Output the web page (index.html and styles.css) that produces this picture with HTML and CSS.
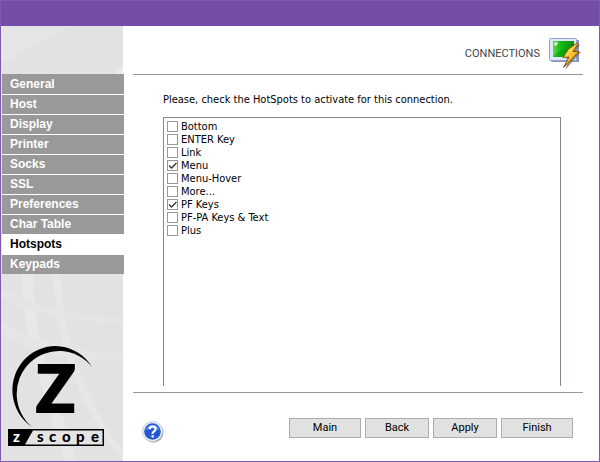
FILE: index.html
```
<!DOCTYPE html>
<html lang="en">
<head>
    <meta charset="UTF-8">
    <meta name="viewport" content="width=device-width, initial-scale=1.0">
    <title>z/Scope - Connections</title>
    <link rel="stylesheet" href="styles.css">
</head>
<body>
    <div class="window">
        <div class="titlebar"></div>
        <div class="content">
            <aside class="sidebar">
                <svg class="waves" viewBox="0 0 122 434" preserveAspectRatio="none" aria-hidden="true">
                    <path d="M0 0H70L0 38Z" fill="#e5e5e5"/>
                    <path d="M112 48L122 40V48Z" fill="#ebebeb"/>
                    <path d="M20 240H32Q32 290 42 325T75 434H64Q42 370 31 325T20 240Z" fill="#e8e8e8"/>
                    <path d="M52 240H60Q60 290 75 335T122 425V434Q80 380 66 330T52 240Z" fill="#e7e7e7"/>
                    <path d="M0 262Q50 290 122 291V296Q50 295 0 272Z" fill="#e5e5e5"/>
                    <path d="M0 294Q30 314 75 322T122 324V334Q40 334 0 306Z" fill="#e5e5e5"/>
                </svg>
                <nav class="menu">
                    <a href="#general">General</a>
                    <a href="#host">Host</a>
                    <a href="#display">Display</a>
                    <a href="#printer">Printer</a>
                    <a href="#socks">Socks</a>
                    <a href="#ssl">SSL</a>
                    <a href="#preferences">Preferences</a>
                    <a href="#chartable">Char Table</a>
                    <a href="#hotspots" class="active">Hotspots</a>
                    <a href="#keypads">Keypads</a>
                </nav>
                <svg class="logo" width="96" height="100" viewBox="0 0 96 100" role="img" aria-label="z/scope">
                    <path d="M84 21A43 44 0 1 0 24 81A42.300 43 0 1 1 84 21Z"/>
                    <text class="logo-z" x="28" y="66">Z</text>
                    <rect y="83" width="96" height="17"/>
                    <path d="M25 84.500H94.500V98.500H17Z" fill="#e4e4e4"/>
                    <text class="logo-name" x="5" y="96" fill="#fff">z</text>
                    <text class="logo-name" x="29 41 54 68 83" y="96">scope</text>
                </svg>
            </aside>
            <main class="main">
                <header class="page-header">
                    <h1>CONNECTIONS</h1>
                    <svg width="32" height="34" viewBox="0 0 32 34" aria-hidden="true">
                        <defs>
                            <linearGradient id="screen" x1="0" y1="0" x2="1" y2="0">
                                <stop offset="0" stop-color="#5bdc4a"/>
                                <stop offset="0.4" stop-color="#12b512"/>
                                <stop offset="1" stop-color="#078a08"/>
                            </linearGradient>
                            <linearGradient id="bolt" x1="0" y1="0" x2="1" y2="1">
                                <stop offset="0" stop-color="#fff3a0"/>
                                <stop offset="0.5" stop-color="#ffc42c"/>
                                <stop offset="1" stop-color="#c96f00"/>
                            </linearGradient>
                        </defs>
                        <rect x="2" y="3" width="28" height="22" rx="1" fill="#8d93a8"/>
                        <rect x="0.5" y="1.5" width="27" height="22" rx="1" fill="#dfe7fb" stroke="#8fa3d8"/>
                        <rect x="4" y="4" width="21" height="16" fill="url(#screen)"/>
                        <path d="M4 20Q12 10 25 8V20Z" fill="#06a006" opacity="0.6"/>
                        <path d="M5 6L9 5L8 8L6 9Z" fill="#fff" opacity="0.9"/>
                        <path d="M24 8H31L26 15H32L16 33L20 22H17Z" fill="#777" opacity="0.8"/>
                        <path d="M27.500 6.500L19.500 12L14 20.500L20 20L14.500 30.500L30 14.500L24 14.500L29 7Z" fill="url(#bolt)" stroke="#8a4d0a"/>
                    </svg>
                </header>
                <section class="panel">
                    <p id="prompt">Please, check the HotSpots to activate for this connection.</p>
                    <div class="list" role="group" aria-labelledby="prompt">
                        <label><input type="checkbox">Bottom</label>
                        <label><input type="checkbox">ENTER Key</label>
                        <label><input type="checkbox">Link</label>
                        <label><input type="checkbox" checked>Menu</label>
                        <label><input type="checkbox">Menu-Hover</label>
                        <label><input type="checkbox">More...</label>
                        <label><input type="checkbox" checked>PF Keys</label>
                        <label><input type="checkbox">PF-PA Keys &amp; Text</label>
                        <label><input type="checkbox">Plus</label>
                    </div>
                </section>
                <footer class="footer">
                    <button type="button" class="help" aria-label="Help">
                        <svg width="22" height="22" viewBox="0 0 22 22" aria-hidden="true">
                            <circle cx="11.500" cy="11.500" r="10" fill="#9a9a9a"/>
                            <circle cx="10.500" cy="10.500" r="10" fill="#edf0f7" stroke="#c3cadb"/>
                            <circle cx="10.500" cy="10.500" r="8.300" fill="#2458d0"/>
                            <path d="M3.500 9A7.300 7.300 0 0 1 17.500 9Q10 6 3.500 9Z" fill="#5b8bec"/>
                            <path d="M7.700 8.300Q7.700 5.500 10.700 5.500T13.600 8.100Q13.600 9.500 12 10.500T10.600 12.800" fill="none" stroke="#fff" stroke-width="2.200"/>
                            <rect x="9.500" y="14.200" width="2.300" height="2.300" fill="#fff"/>
                        </svg>
                    </button>
                    <div class="buttons">
                        <button type="button" class="btn btn-wide">Main</button>
                        <button type="button" class="btn">Back</button>
                        <button type="button" class="btn">Apply</button>
                        <button type="button" class="btn btn-wide">Finish</button>
                    </div>
                </footer>
            </main>
        </div>
    </div>
</body>
</html>
```

FILE: styles.css
```
* {
    box-sizing: border-box;
}
body {
    margin: 0;
    font-family: "DejaVu Sans Condensed", "DejaVu Sans", sans-serif;
    font-size: 11px;
    color: #000;
}
.window {
    display: flex;
    flex-direction: column;
    min-height: 100vh;
    border: 1px solid #7f5bb0;
    background: #fff;
}
.titlebar {
    height: 25px;
    background: #744da9;
}
.content {
    display: flex;
    flex: 1;
}

/* left column */
.sidebar {
    position: relative;
    display: flex;
    flex-direction: column;
    width: 122px;
    padding-top: 48px;
    background: #e2e2e2;
}
.waves {
    position: absolute;
    top: 0;
    left: 0;
    width: 100%;
    height: 100%;
}
.menu {
    position: relative;
    margin: 0 -1px 0 1px;
}
.menu a {
    display: block;
    height: 20px;
    padding-left: 8px;
    border-top: 1px solid #fff;
    background: #999;
    color: #fff;
    font: bold 12px/19px "Liberation Sans", Arial, sans-serif;
    text-decoration: none;
}
.menu a:first-child {
    border-top-color: #999;
}
.menu a.active {
    background: #fff;
    color: #000;
}
.logo {
    position: relative;
    margin: auto 0 15px 7px;
}
.logo-z {
    font: 900 65px Lato, sans-serif;
    stroke: #000;
    stroke-width: 2px;
}
.logo-name {
    font: 900 15px Lato, sans-serif;
}

/* right column */
.main {
    display: flex;
    flex: 1;
    flex-direction: column;
    padding: 0 16px 0 10px;
}
.page-header {
    display: flex;
    justify-content: flex-end;
    align-items: center;
    gap: 9px;
    height: 49px;
    padding: 8px 2px 0 0;
    border-bottom: 1px solid #999;
}
.page-header h1 {
    margin: 0;
    color: #444;
    font: 11px/16px Roboto, Arial, sans-serif;
}
.panel {
    display: flex;
    flex: 1;
    flex-direction: column;
    padding: 17px 22px 6px 30px;
}
.panel p {
    margin: 0 0 9px;
    line-height: 16px;
}
.list {
    flex: 1;
    padding: 2px 3px;
    border: 1px solid #828790;
    border-bottom: 0;
}
.list label {
    display: flex;
    align-items: center;
    gap: 3px;
    height: 13px;
    line-height: 13px;
}
.list input {
    appearance: none;
    width: 11px;
    height: 11px;
    margin: 0;
    border: 1px solid #999;
    background: #fff;
}
.list input:checked {
    background: #fff url("data:image/svg+xml,%3Csvg xmlns='http://www.w3.org/2000/svg' viewBox='0 0 9 9'%3E%3Cpath d='M1 4.500L3.500 7L8.500 2' fill='none' stroke='%23333' stroke-width='1.300'/%3E%3C/svg%3E");
}
.footer {
    display: flex;
    justify-content: space-between;
    align-items: flex-start;
    height: 69px;
    padding: 25px 10px 0 9px;
    border-top: 1px solid #999;
}
.help {
    height: 22px;
    margin-top: 3px;
    padding: 0;
    border: 0;
    background: none;
}
.buttons {
    display: flex;
    gap: 4px;
}
.btn {
    width: 64px;
    height: 20px;
    padding: 0;
    border: 1px solid #adadad;
    background: #e1e1e1;
    color: #000;
    font: 11px/18px Roboto, Arial, sans-serif;
}
.btn-wide {
    width: 72px;
}
```
